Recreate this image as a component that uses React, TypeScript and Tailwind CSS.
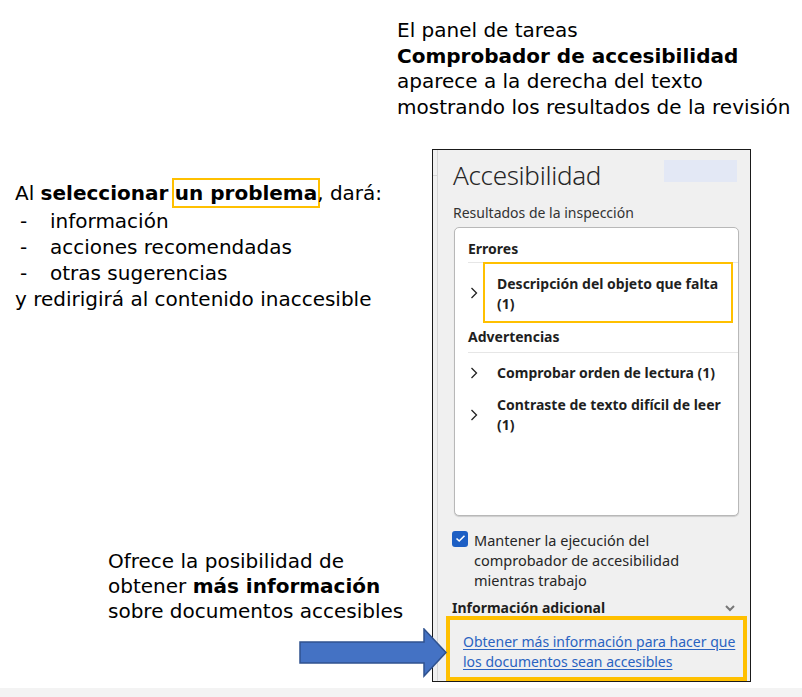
import React from "react";

const Chevron = () => (
  <svg width="10" height="14" viewBox="0 0 10 14" className="shrink-0">
    <path d="M2.5 2 L7.5 7 L2.5 12" fill="none" stroke="#222" strokeWidth="1.3" />
  </svg>
);

export default function App() {
  const verdana = { fontFamily: '"DejaVu Sans", Verdana, sans-serif' };
  return (
    <div className="relative w-[802px] h-[697px] bg-white overflow-hidden text-black" style={verdana}>
      {/* top caption */}
      <div className="pl-[397px] pt-[18px] text-[20px] leading-[25.5px]">
        <div>El panel de tareas</div>
        <div className="font-bold">Comprobador de accesibilidad</div>
        <div>aparece a la derecha del texto</div>
        <div>mostrando los resultados de la revisión</div>
      </div>

      <div className="flex mt-[29px]">
        {/* left column */}
        <div className="w-[432px] shrink-0 flex flex-col">
          <div className="pl-[15px] pt-[29px] text-[20px] leading-[26px]">
            <div>
              Al <b>seleccionar</b>{" "}
              <span className="font-bold inline-block border-2 border-[#ffc000] pl-[1px] pr-[1px] -ml-[3px] -mr-[3px] leading-[26px]">un problema</span>, dará:
            </div>
            <div className="flex"><span className="w-[35px] pl-[5px]">-</span>información</div>
            <div className="flex"><span className="w-[35px] pl-[5px]">-</span>acciones recomendadas</div>
            <div className="flex"><span className="w-[35px] pl-[5px]">-</span>otras sugerencias</div>
            <div>y redirigirá al contenido inaccesible</div>
          </div>
          <div className="pl-[108px] mt-[237px] text-[20px] leading-[25px]">
            <div>Ofrece la posibilidad de</div>
            <div>obtener <b>más información</b></div>
            <div>sobre documentos accesibles</div>
          </div>
        </div>

        {/* panel */}
        <div
          className="w-[319px] h-[533px] border border-[#1a1a1a] bg-[#f0f0f0] flex flex-col relative"
          style={{ fontFamily: '"Noto Sans", "Open Sans", sans-serif' }}
        >
          <div className="absolute left-[4px] top-0 bottom-0 w-px bg-[#d6d6d6]" />
          <div className="absolute left-0 top-[25px] w-[5px] h-px bg-[#d6d6d6]" />
          <div className="flex items-start justify-between pl-[20px] pr-[13px] pt-[9px]">
            <div className="text-[26px] leading-[32px] font-light text-[#262626] tracking-[-0.3px]">Accesibilidad</div>
            <div className="w-[73px] h-[22px] bg-[#e3e8f5] mt-[1px]" />
          </div>
          <div className="pl-[20px] mt-[12px] text-[14px] leading-[20px] text-[#333]">Resultados de la inspección</div>
          <div className="ml-[21px] mr-[11px] mt-[4px] h-[292px] bg-white border border-[#b8b8b8] rounded-[5px] shadow-[0_1px_1px_rgba(0,0,0,0.15)] flex flex-col text-[14px] leading-[20px] font-bold text-[#1f1f1f]">
            <div className="pl-[13px] pt-[11px] pb-[3px]">Errores</div>
            <div className="ml-[13px] h-px bg-[#e6e6e6]" />
            <div className="flex items-center ml-[14px]">
              <Chevron />
              <div className="ml-[4px] w-[250px] h-[61px] -mt-[1px] border-2 border-[#ffc000] pl-[12px] pt-[10px] leading-[20px]">
                Descripción del objeto que falta (1)
              </div>
            </div>
            <div className="pl-[13px] pt-[4px] pb-[5px]">Advertencias</div>
            <div className="ml-[13px] h-px bg-[#e6e6e6]" />
            <div className="flex items-center ml-[14px] mt-[10px]">
              <Chevron />
              <div className="ml-[18px]">Comprobar orden de lectura (1)</div>
            </div>
            <div className="flex items-center ml-[14px] mt-[12px]">
              <Chevron />
              <div className="ml-[18px] w-[240px]">Contraste de texto difícil de leer (1)</div>
            </div>
          </div>
          <div className="flex items-start pl-[19px] mt-[14px] text-[14.5px] leading-[20px] text-[#262626]">
            <div className="w-[16px] h-[16px] mt-[1px] rounded-[3px] bg-[#1d5fc4] flex items-center justify-center shrink-0">
              <svg width="11" height="9" viewBox="0 0 11 9">
                <path d="M1.5 4.5 L4.2 7 L9.5 1.8" fill="none" stroke="white" strokeWidth="1.6" />
              </svg>
            </div>
            <div className="ml-[6px]">
              Mantener la ejecución del<br />comprobador de accesibilidad<br />mientras trabajo
            </div>
          </div>
          <div className="flex items-center justify-between pl-[19px] pr-[14px] mt-[8px] text-[14px] leading-[20px] font-bold text-[#1f1f1f]">
            <div>Información adicional</div>
            <svg width="12" height="8" viewBox="0 0 12 8">
              <path d="M2 2 L6 6 L10 2" fill="none" stroke="#777" strokeWidth="2" />
            </svg>
          </div>
          <div className="ml-[13px] mr-[3px] -mt-[2px] h-[66px] border-[4px] border-[#ffc000] pl-[13px] pt-[12px] text-[14px] leading-[20px] text-[#2a63c1] underline underline-offset-[2px] whitespace-nowrap">
            Obtener más información para hacer que<br />los documentos sean accesibles
          </div>
        </div>
      </div>

      {/* arrow */}
      <svg className="absolute left-[299px] top-[628px]" width="149" height="50" viewBox="0 0 149 50">
        <path
          d="M1 14 L125 14 L125 1 L147 24.5 L125 48 L125 35 L1 35 Z"
          fill="#4472c4"
          stroke="#2f528f"
          strokeWidth="1.5"
        />
      </svg>

      <div className="absolute left-0 right-0 bottom-0 h-[9px] bg-[#f3f3f3]" />
    </div>
  );
}
